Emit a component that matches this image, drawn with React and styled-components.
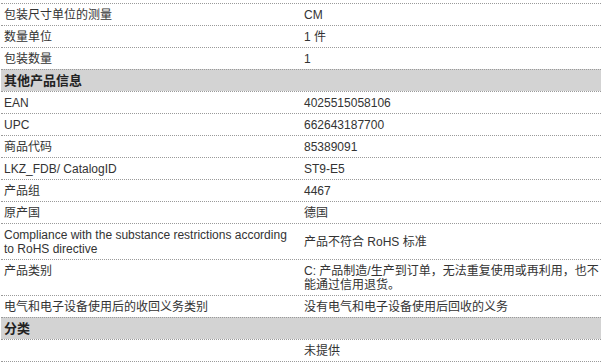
import React from "react";
import styled, { createGlobalStyle } from "styled-components";

const Global = createGlobalStyle`
  html, body { margin: 0; padding: 0; background: #fff; }
  body {
    font-family: "Liberation Sans", Arial, "Noto Sans CJK SC", sans-serif;
    font-size: 12px;
    color: #333;
  }
`;

const Table = styled.div`
  width: 600px;
  margin: 3px 0 0 1px;
  border-bottom: 1px dotted #9a9a9a;
`;

const Row = styled.div`
  display: grid;
  grid-template-columns: 299px 1fr;
  border-top: 1px dotted #9a9a9a;
  background: ${(p) => (p.$head ? "#d3d3d3" : "transparent")};
`;

const Label = styled.div`
  padding: 4px 4px 3px 3px;
  line-height: 14px;
  font-size: ${(p) => (p.$head ? "13px" : "12px")};
  font-weight: ${(p) => (p.$head ? "bold" : "normal")};
  color: ${(p) => (p.$head ? "#222" : "#333")};
`;

const Value = styled.div`
  padding: 4px 0 3px 4px;
  line-height: 14px;
  font-size: 12px;
  color: #333;
  align-self: ${(p) => (p.$center ? "center" : "stretch")};
`;

const rows = [
  ["包装尺寸单位的测量", "CM"],
  ["数量单位", "1 件"],
  ["包装数量", "1"],
  { head: "其他产品信息" },
  ["EAN", "4025515058106"],
  ["UPC", "662643187700"],
  ["商品代码", "85389091"],
  ["LKZ_FDB/ CatalogID", "ST9-E5"],
  ["产品组", "4467"],
  ["原产国", "德国"],
  [
    "Compliance with the substance restrictions according to RoHS directive",
    "产品不符合 RoHS 标准",
    true,
  ],
  ["产品类别", "C: 产品制造/生产到订单，无法重复使用或再利用，也不能通过信用退货。"],
  ["电气和电子设备使用后的收回义务类别", "没有电气和电子设备使用后回收的义务"],
  { head: "分类" },
  ["", "未提供"],
];

export default function App() {
  return (
    <>
      <Global />
      <Table>
        {rows.map((r, i) =>
          r.head ? (
            <Row key={i} $head>
              <Label $head>{r.head}</Label>
              <Value />
            </Row>
          ) : (
            <Row key={i}>
              <Label>{r[0]}</Label>
              <Value $center={!!r[2]}>{r[1]}</Value>
            </Row>
          )
        )}
      </Table>
    </>
  );
}
